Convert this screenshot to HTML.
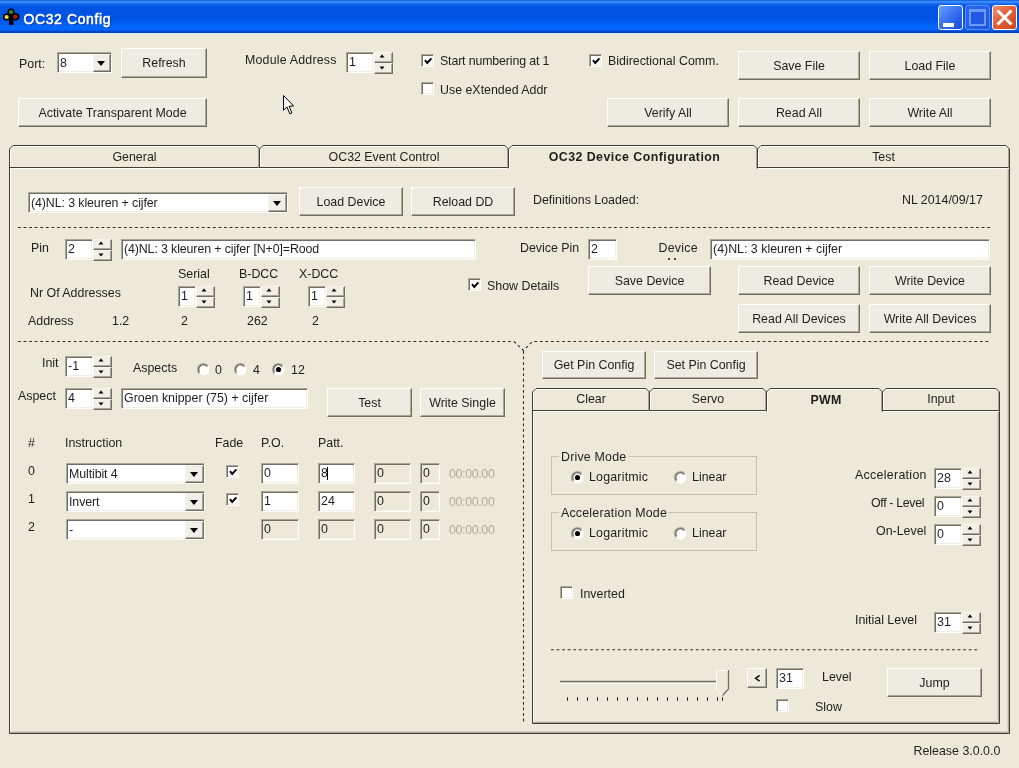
<!DOCTYPE html><html><head><meta charset="utf-8"><style>
html,body{margin:0;padding:0}
body{width:1019px;height:768px;position:relative;overflow:hidden;background:#ECE9D8;font-family:"Liberation Sans",sans-serif;font-size:12.4px;color:#1E1E1E}
#root{position:absolute;left:0;top:0;width:1019px;height:768px;filter:blur(0.3px);will-change:transform}
.l{position:absolute;white-space:nowrap;line-height:15px;-webkit-font-smoothing:antialiased}
.b{position:absolute;box-sizing:border-box;border:1px solid;border-color:#fff #716F64 #716F64 #fff;box-shadow:inset -1px -1px #ACA899;background:#EEEBE2}
.e{position:absolute;box-sizing:border-box;border:1px solid;border-color:#ACA899 #fff #fff #ACA899;box-shadow:inset 1px 1px #716F64,inset -1px -1px #F1EFE2}
.ud{position:absolute;box-sizing:border-box;border:1px solid;border-color:#F6F4EC #716F64 #716F64 #F6F4EC;box-shadow:inset -1px -1px #ACA899;background:#F0EEE6}
.cb{position:absolute;box-sizing:border-box;border:1px solid;border-color:#F6F4EC #716F64 #716F64 #F6F4EC;box-shadow:inset -1px -1px #ACA899;background:#F0EEE6}
.au,.ad,.ac{position:absolute;left:50%;top:50%;width:0;height:0;border-style:solid;border-color:transparent}
.au{margin-left:-3px;margin-top:-2px;border-width:0 2.5px 3px 2.5px;border-bottom-color:#000}
.ad{margin-left:-3px;margin-top:-2px;border-width:3px 2.5px 0 2.5px;border-top-color:#000}
.ac{margin-left:-5px;margin-top:-2px;border-width:5px 4px 0 4px;border-top-color:#000}
.ck{position:absolute;width:13px;height:13px;box-sizing:border-box;border:1px solid;border-color:#ACA899 #fff #fff #ACA899;box-shadow:inset 1px 1px #716F64,inset -1px -1px #F1EFE2;background:#fff}
.rd{position:absolute}
svg{overflow:visible}
</style></head><body><div id="root">

<div style="position:absolute;left:0;top:0;width:1019px;height:34px;background:linear-gradient(180deg,#0A50D2 0px,#3C8CFF 1.5px,#3282FA 2.5px,#0E62EC 4.5px,#0054E4 7px,#0053E3 18px,#005CF0 23px,#0066FF 26.5px,#0064FC 30.2px,#0042C4 31.6px,#0040BE 32.6px,#D8E6F2 33px,#E2EAEA 34px)"></div>

<svg style="position:absolute;left:2px;top:8px" width="20" height="18" viewBox="0 0 20 18">
<circle cx="9" cy="4.2" r="3.6" fill="#000"/>
<circle cx="4.6" cy="9" r="3.6" fill="#000"/>
<circle cx="13.6" cy="8.8" r="3.8" fill="#000"/>
<rect x="6.5" y="4" width="5" height="6" fill="#000"/>
<path d="M7 9 L11.5 9 L11.5 17 L7 17 Z" fill="#000"/>
<circle cx="9" cy="4" r="2.1" fill="#2F8F2F"/>
<circle cx="4.6" cy="9" r="2.1" fill="#EEDC40"/>
<circle cx="13.4" cy="8.8" r="2.2" fill="#A81C1C"/>
</svg>
<div class="l" style="left:23.5px;top:10.7px;color:#fff;font-weight:normal;-webkit-text-stroke:0.55px #fff;font-size:14px;line-height:16px;letter-spacing:0.6px;text-shadow:1px 1px 0 #0A2F9E">OC32 Config</div>
<div style="position:absolute;left:938px;top:5px;width:25px;height:25px;box-sizing:border-box;border:1px solid #fff;border-radius:3px;background:linear-gradient(135deg,#6A9EFF,#3A74F4 45%,#2458E0 80%,#1B4FD8)"><div style="position:absolute;left:4px;top:17px;width:11px;height:4px;background:#fff"></div></div>
<div style="position:absolute;left:965px;top:5px;width:25px;height:25px;box-sizing:border-box;border:1px solid #5C8CF4;border-radius:3px;background:linear-gradient(135deg,#2A68F2,#1B56E2)"><div style="position:absolute;left:3px;top:3px;width:17px;height:17px;box-sizing:border-box;border:2px solid #6E98F2;border-top-width:3px;background:#2058E4"></div></div>
<div style="position:absolute;left:992px;top:5px;width:25px;height:25px;box-sizing:border-box;border:1px solid #fff;border-radius:3px;background:linear-gradient(135deg,#F29068,#E2603A 45%,#D44E26 80%,#C8441E)">
<svg style="position:absolute;left:0;top:0" width="23" height="23"><path d="M4.5 4.5 L18.5 18.5 M18.5 4.5 L4.5 18.5" stroke="#fff" stroke-width="3"/></svg></div>

<div class="l" style="left:19px;top:57.00px;">Port:</div>
<div class="e" style="left:57px;top:52px;width:55px;height:21px;background:#fff"></div>
<div class="cb" style="left:93px;top:54px;width:18px;height:18px"><div class="ac"></div></div>
<div class="l" style="left:60px;top:55.70px;letter-spacing:-0.1px;">8</div>
<div class="b" style="left:121px;top:48px;width:86px;height:30px"></div>
<div class="l" style="left:14.0px;top:56.30px;width:300px;text-align:center;">Refresh</div>
<div class="b" style="left:18px;top:98px;width:189px;height:29px"></div>
<div class="l" style="left:-37.5px;top:105.80px;width:300px;text-align:center;">Activate Transparent Mode</div>
<div class="l" style="left:245px;top:53.00px;letter-spacing:0.2px;">Module Address</div>
<div class="e" style="left:346px;top:52px;width:28px;height:21px;background:#fff"></div>
<div class="l" style="left:349px;top:55.00px;">1</div>
<div class="ud" style="left:374px;top:52px;width:19px;height:11px"></div>
<div class="ud" style="left:374px;top:63px;width:19px;height:11px"></div>
<svg style="position:absolute;left:379.2px;top:53.9px" width="6" height="4"><path d="M0.5 3.5 L3 0.5 L5.5 3.5 Z" fill="#000"/></svg>
<svg style="position:absolute;left:379.2px;top:66.0px" width="6" height="4"><path d="M0.5 0.5 L3 3.5 L5.5 0.5 Z" fill="#000"/></svg>
<div class="ck" style="left:421px;top:54px"><svg width="13" height="13" style="position:absolute;left:0;top:0"><path d="M3 5.2 L5.2 8 L9.4 3.3" stroke="#000" stroke-width="2" fill="none"/></svg></div>
<div class="l" style="left:440px;top:54.30px;letter-spacing:-0.15px;">Start numbering at 1</div>
<div class="ck" style="left:421px;top:82px"></div>
<div class="l" style="left:440px;top:83.00px;">Use eXtended Addr</div>
<div class="ck" style="left:589px;top:54px"><svg width="13" height="13" style="position:absolute;left:0;top:0"><path d="M3 5.2 L5.2 8 L9.4 3.3" stroke="#000" stroke-width="2" fill="none"/></svg></div>
<div class="l" style="left:608px;top:54.30px;">Bidirectional Comm.</div>
<div class="b" style="left:738px;top:51px;width:122px;height:29px"></div>
<div class="l" style="left:649.0px;top:58.80px;width:300px;text-align:center;">Save File</div>
<div class="b" style="left:869px;top:51px;width:122px;height:29px"></div>
<div class="l" style="left:780.0px;top:58.80px;width:300px;text-align:center;">Load File</div>
<div class="b" style="left:607px;top:98px;width:122px;height:29px"></div>
<div class="l" style="left:518.0px;top:105.80px;width:300px;text-align:center;">Verify All</div>
<div class="b" style="left:738px;top:98px;width:122px;height:29px"></div>
<div class="l" style="left:649.0px;top:105.80px;width:300px;text-align:center;">Read All</div>
<div class="b" style="left:869px;top:98px;width:122px;height:29px"></div>
<div class="l" style="left:780.0px;top:105.80px;width:300px;text-align:center;">Write All</div>
<svg style="position:absolute;left:283px;top:95px" width="14" height="22" viewBox="0 0 14 22">
<path d="M0.5 0.5 L0.5 15.3 L3.9 11.9 L6.9 18.9 L8.9 18 L6.1 11.2 L10.6 11 Z" fill="#fff" stroke="#000" stroke-width="1"/></svg>
<svg style="position:absolute;left:0;top:0" width="1019" height="768"><path d="M9.5 167 V733.5 H1009.5 V167" stroke="#3F3D35" fill="none"/><path d="M10.5 168 V732" stroke="#fff" fill="none"/><path d="M10 732.5 H1008.5 V168" stroke="#ACA899" fill="none"/><path d="M11 731.5 H1007.5 V169" stroke="#D8D4C6" fill="none"/><path d="M9 167.5 H509 M757 167.5 H1010" stroke="#3F3D35" fill="none"/><path d="M10 168.5 H510 M757 168.5 H1009" stroke="#fff" fill="none"/><path d="M258.5 149 V167.5" stroke="#ACA899" fill="none"/><path d="M9.5 167.5 V149 L13 145.5 H256 L259.5 149 V167.5" stroke="#3F3D35" fill="none"/><path d="M10.5 167.0 V149.5 L13.5 146.5 H255.5" stroke="#fff" fill="none"/><path d="M507.5 149 V167.5" stroke="#ACA899" fill="none"/><path d="M259.5 167.5 V149 L263 145.5 H505 L508.5 149 V167.5" stroke="#3F3D35" fill="none"/><path d="M260.5 167.0 V149.5 L263.5 146.5 H504.5" stroke="#fff" fill="none"/><path d="M756.5 149 V168.5" stroke="#ACA899" fill="none"/><path d="M508.5 168.5 V149 L512 145.5 H754 L757.5 149 V168.5" stroke="#3F3D35" fill="none"/><path d="M509.5 169.0 V149.5 L512.5 146.5 H753.5" stroke="#fff" fill="none"/><path d="M1008.5 149 V167.5" stroke="#ACA899" fill="none"/><path d="M757.5 167.5 V149 L761 145.5 H1006 L1009.5 149 V167.5" stroke="#3F3D35" fill="none"/><path d="M758.5 167.0 V149.5 L761.5 146.5 H1005.5" stroke="#fff" fill="none"/></svg>
<div class="l" style="left:-15.5px;top:149.80px;width:300px;text-align:center;">General</div>
<div class="l" style="left:234.0px;top:149.80px;width:300px;text-align:center;">OC32 Event Control</div>
<div class="l" style="left:484.5px;top:150.40px;width:300px;text-align:center;font-weight:bold;letter-spacing:0.45px;">OC32 Device Configuration</div>
<div class="l" style="left:733.5px;top:149.80px;width:300px;text-align:center;">Test</div>
<div class="e" style="left:28px;top:192px;width:260px;height:21px;background:#fff"></div>
<div class="cb" style="left:268px;top:194px;width:19px;height:18px"><div class="ac"></div></div>
<div class="l" style="left:31px;top:195.70px;letter-spacing:-0.1px;">(4)NL: 3 kleuren + cijfer</div>
<div class="b" style="left:299px;top:187px;width:104px;height:29px"></div>
<div class="l" style="left:201.0px;top:194.80px;width:300px;text-align:center;">Load Device</div>
<div class="b" style="left:411px;top:187px;width:104px;height:29px"></div>
<div class="l" style="left:313.0px;top:194.80px;width:300px;text-align:center;">Reload DD</div>
<div class="l" style="left:533px;top:193.00px;">Definitions Loaded:</div>
<div class="l" style="left:902px;top:193.00px;">NL 2014/09/17</div>
<svg style="position:absolute;left:0;top:0" width="1019" height="768"><path d="M18 227.5 H990" stroke="#2E2C25" stroke-width="1.1" stroke-dasharray="2.8 2.77" fill="none"/></svg>
<div class="l" style="left:31px;top:241.00px;">Pin</div>
<div class="e" style="left:65px;top:239px;width:28px;height:21px;background:#fff"></div>
<div class="l" style="left:68px;top:242.00px;">2</div>
<div class="ud" style="left:93px;top:239px;width:19px;height:11px"></div>
<div class="ud" style="left:93px;top:250px;width:19px;height:11px"></div>
<svg style="position:absolute;left:98.2px;top:240.9px" width="6" height="4"><path d="M0.5 3.5 L3 0.5 L5.5 3.5 Z" fill="#000"/></svg>
<svg style="position:absolute;left:98.2px;top:253.0px" width="6" height="4"><path d="M0.5 0.5 L3 3.5 L5.5 0.5 Z" fill="#000"/></svg>
<div class="e" style="left:121px;top:239px;width:355px;height:21px;background:#fff"></div>
<div class="l" style="left:124px;top:242.00px;letter-spacing:-0.12px;">(4)NL: 3 kleuren + cijfer [N+0]=Rood</div>
<div class="l" style="left:520px;top:241.00px;">Device Pin</div>
<div class="e" style="left:588px;top:239px;width:29px;height:21px;background:#fff"></div>
<div class="l" style="left:591px;top:242.00px;">2</div>
<div class="l" style="left:658.5px;top:241.00px;letter-spacing:0.25px;">Device</div>
<div style="position:absolute;left:667.5px;top:258px;width:2px;height:2px;background:#444"></div><div style="position:absolute;left:674px;top:258px;width:2px;height:2px;background:#444"></div>
<div class="e" style="left:710px;top:239px;width:280px;height:21px;background:#fff"></div>
<div class="l" style="left:713px;top:242.00px;">(4)NL: 3 kleuren + cijfer</div>
<div class="l" style="left:178px;top:267.00px;">Serial</div>
<div class="l" style="left:239px;top:267.00px;">B-DCC</div>
<div class="l" style="left:299px;top:267.00px;">X-DCC</div>
<div class="l" style="left:30px;top:286.00px;">Nr Of Addresses</div>
<div class="e" style="left:178px;top:286px;width:18px;height:21px;background:#fff"></div>
<div class="l" style="left:181px;top:289.00px;">1</div>
<div class="ud" style="left:196px;top:286px;width:19px;height:11px"></div>
<div class="ud" style="left:196px;top:297px;width:19px;height:11px"></div>
<svg style="position:absolute;left:201.2px;top:287.9px" width="6" height="4"><path d="M0.5 3.5 L3 0.5 L5.5 3.5 Z" fill="#000"/></svg>
<svg style="position:absolute;left:201.2px;top:300.0px" width="6" height="4"><path d="M0.5 0.5 L3 3.5 L5.5 0.5 Z" fill="#000"/></svg>
<div class="e" style="left:243px;top:286px;width:18px;height:21px;background:#fff"></div>
<div class="l" style="left:246px;top:289.00px;">1</div>
<div class="ud" style="left:261px;top:286px;width:19px;height:11px"></div>
<div class="ud" style="left:261px;top:297px;width:19px;height:11px"></div>
<svg style="position:absolute;left:266.2px;top:287.9px" width="6" height="4"><path d="M0.5 3.5 L3 0.5 L5.5 3.5 Z" fill="#000"/></svg>
<svg style="position:absolute;left:266.2px;top:300.0px" width="6" height="4"><path d="M0.5 0.5 L3 3.5 L5.5 0.5 Z" fill="#000"/></svg>
<div class="e" style="left:308px;top:286px;width:18px;height:21px;background:#fff"></div>
<div class="l" style="left:311px;top:289.00px;">1</div>
<div class="ud" style="left:326px;top:286px;width:19px;height:11px"></div>
<div class="ud" style="left:326px;top:297px;width:19px;height:11px"></div>
<svg style="position:absolute;left:331.2px;top:287.9px" width="6" height="4"><path d="M0.5 3.5 L3 0.5 L5.5 3.5 Z" fill="#000"/></svg>
<svg style="position:absolute;left:331.2px;top:300.0px" width="6" height="4"><path d="M0.5 0.5 L3 3.5 L5.5 0.5 Z" fill="#000"/></svg>
<div class="ck" style="left:468px;top:278px"><svg width="13" height="13" style="position:absolute;left:0;top:0"><path d="M3 5.2 L5.2 8 L9.4 3.3" stroke="#000" stroke-width="2" fill="none"/></svg></div>
<div class="l" style="left:487px;top:279.00px;">Show Details</div>
<div class="b" style="left:588px;top:266px;width:123px;height:29px"></div>
<div class="l" style="left:499.5px;top:273.80px;width:300px;text-align:center;">Save Device</div>
<div class="b" style="left:738px;top:266px;width:122px;height:29px"></div>
<div class="l" style="left:649.0px;top:273.80px;width:300px;text-align:center;">Read Device</div>
<div class="b" style="left:869px;top:266px;width:122px;height:29px"></div>
<div class="l" style="left:780.0px;top:273.80px;width:300px;text-align:center;">Write Device</div>
<div class="b" style="left:738px;top:304px;width:122px;height:29px"></div>
<div class="l" style="left:649.0px;top:311.80px;width:300px;text-align:center;">Read All Devices</div>
<div class="b" style="left:869px;top:304px;width:122px;height:29px"></div>
<div class="l" style="left:780.0px;top:311.80px;width:300px;text-align:center;">Write All Devices</div>
<div class="l" style="left:28px;top:314.00px;">Address</div>
<div class="l" style="left:112px;top:314.00px;">1.2</div>
<div class="l" style="left:181px;top:314.00px;">2</div>
<div class="l" style="left:247px;top:314.00px;">262</div>
<div class="l" style="left:312px;top:314.00px;">2</div>
<svg style="position:absolute;left:0;top:0" width="1019" height="768">
<path d="M18 341.5 H514 L523.5 350.5 L532.5 341.5 H990" stroke="#2E2C25" stroke-width="1.1" stroke-dasharray="2.8 2.77" fill="none"/>
<path d="M523.5 351 V723" stroke="#2E2C25" stroke-width="1.1" stroke-dasharray="2.8 2.77" fill="none"/>
</svg>
<div class="l" style="left:42px;top:356.20px;">Init</div>
<div class="e" style="left:65px;top:356px;width:28px;height:21px;background:#fff"></div>
<div class="l" style="left:68px;top:359.00px;">-1</div>
<div class="ud" style="left:93px;top:356px;width:19px;height:11px"></div>
<div class="ud" style="left:93px;top:367px;width:19px;height:11px"></div>
<svg style="position:absolute;left:98.2px;top:357.9px" width="6" height="4"><path d="M0.5 3.5 L3 0.5 L5.5 3.5 Z" fill="#000"/></svg>
<svg style="position:absolute;left:98.2px;top:370.0px" width="6" height="4"><path d="M0.5 0.5 L3 3.5 L5.5 0.5 Z" fill="#000"/></svg>
<div class="l" style="left:133px;top:361.00px;">Aspects</div>
<svg class="rd" style="left:197px;top:363px" width="13" height="13" viewBox="0 0 13 13">
<circle cx="6.5" cy="6.5" r="6" fill="#fff"/>
<path d="M2.25 10.75 A6 6 0 0 1 10.75 2.25" stroke="#ACA899" stroke-width="1.1" fill="none"/>
<path d="M2.6 9.4 A4.8 4.8 0 0 1 10.4 3.6" stroke="#716F64" stroke-width="1.4" fill="none"/>
</svg>
<div class="l" style="left:215px;top:363.00px;">0</div>
<svg class="rd" style="left:234px;top:363px" width="13" height="13" viewBox="0 0 13 13">
<circle cx="6.5" cy="6.5" r="6" fill="#fff"/>
<path d="M2.25 10.75 A6 6 0 0 1 10.75 2.25" stroke="#ACA899" stroke-width="1.1" fill="none"/>
<path d="M2.6 9.4 A4.8 4.8 0 0 1 10.4 3.6" stroke="#716F64" stroke-width="1.4" fill="none"/>
</svg>
<div class="l" style="left:253px;top:363.00px;">4</div>
<svg class="rd" style="left:272px;top:363px" width="13" height="13" viewBox="0 0 13 13">
<circle cx="6.5" cy="6.5" r="6" fill="#fff"/>
<path d="M2.25 10.75 A6 6 0 0 1 10.75 2.25" stroke="#ACA899" stroke-width="1.1" fill="none"/>
<path d="M2.6 9.4 A4.8 4.8 0 0 1 10.4 3.6" stroke="#716F64" stroke-width="1.4" fill="none"/>
<circle cx="6.5" cy="6.5" r="2.6" fill="#000"/></svg>
<div class="l" style="left:291px;top:363.00px;">12</div>
<div class="l" style="left:18px;top:389.00px;">Aspect</div>
<div class="e" style="left:65px;top:388px;width:28px;height:21px;background:#fff"></div>
<div class="l" style="left:68px;top:391.00px;">4</div>
<div class="ud" style="left:93px;top:388px;width:19px;height:11px"></div>
<div class="ud" style="left:93px;top:399px;width:19px;height:11px"></div>
<svg style="position:absolute;left:98.2px;top:389.9px" width="6" height="4"><path d="M0.5 3.5 L3 0.5 L5.5 3.5 Z" fill="#000"/></svg>
<svg style="position:absolute;left:98.2px;top:402.0px" width="6" height="4"><path d="M0.5 0.5 L3 3.5 L5.5 0.5 Z" fill="#000"/></svg>
<div class="e" style="left:121px;top:388px;width:187px;height:21px;background:#fff"></div>
<div class="l" style="left:124px;top:391.00px;">Groen knipper (75) + cijfer</div>
<div class="b" style="left:327px;top:388px;width:85px;height:29px"></div>
<div class="l" style="left:219.5px;top:395.80px;width:300px;text-align:center;">Test</div>
<div class="b" style="left:420px;top:388px;width:85px;height:29px"></div>
<div class="l" style="left:312.5px;top:395.80px;width:300px;text-align:center;">Write Single</div>
<div class="l" style="left:28px;top:436.00px;">#</div>
<div class="l" style="left:65px;top:436.00px;">Instruction</div>
<div class="l" style="left:215px;top:436.00px;">Fade</div>
<div class="l" style="left:261px;top:436.00px;">P.O.</div>
<div class="l" style="left:318px;top:436.00px;">Patt.</div>
<div class="l" style="left:28px;top:464.00px;">0</div>
<div class="e" style="left:66px;top:463px;width:139px;height:21px;background:#fff"></div>
<div class="cb" style="left:185px;top:465px;width:19px;height:18px"><div class="ac"></div></div>
<div class="l" style="left:69px;top:466.70px;letter-spacing:-0.1px;">Multibit 4</div>
<div class="ck" style="left:226px;top:465px"><svg width="13" height="13" style="position:absolute;left:0;top:0"><path d="M3 5.2 L5.2 8 L9.4 3.3" stroke="#000" stroke-width="2" fill="none"/></svg></div>
<div class="e" style="left:261px;top:463px;width:38px;height:21px;background:#fff"></div>
<div class="l" style="left:264px;top:466.00px;">0</div>
<div class="e" style="left:318px;top:463px;width:37px;height:21px;background:#fff"></div>
<div class="l" style="left:321px;top:466.00px;">8</div>
<div class="e" style="left:374px;top:463px;width:37px;height:21px;background:#ECE9D8"></div>
<div class="l" style="left:377px;top:466.00px;">0</div>
<div class="e" style="left:420px;top:463px;width:20px;height:21px;background:#ECE9D8"></div>
<div class="l" style="left:423px;top:466.00px;">0</div>
<div class="l" style="left:449px;top:467.00px;color:#B0AD9E;letter-spacing:-0.35px;">00:00.00</div>
<div class="l" style="left:28px;top:492.00px;">1</div>
<div class="e" style="left:66px;top:491px;width:139px;height:21px;background:#fff"></div>
<div class="cb" style="left:185px;top:493px;width:19px;height:18px"><div class="ac"></div></div>
<div class="l" style="left:69px;top:494.70px;letter-spacing:-0.1px;">Invert</div>
<div class="ck" style="left:226px;top:493px"><svg width="13" height="13" style="position:absolute;left:0;top:0"><path d="M3 5.2 L5.2 8 L9.4 3.3" stroke="#000" stroke-width="2" fill="none"/></svg></div>
<div class="e" style="left:261px;top:491px;width:38px;height:21px;background:#fff"></div>
<div class="l" style="left:264px;top:494.00px;">1</div>
<div class="e" style="left:318px;top:491px;width:37px;height:21px;background:#fff"></div>
<div class="l" style="left:321px;top:494.00px;">24</div>
<div class="e" style="left:374px;top:491px;width:37px;height:21px;background:#ECE9D8"></div>
<div class="l" style="left:377px;top:494.00px;">0</div>
<div class="e" style="left:420px;top:491px;width:20px;height:21px;background:#ECE9D8"></div>
<div class="l" style="left:423px;top:494.00px;">0</div>
<div class="l" style="left:449px;top:495.00px;color:#B0AD9E;letter-spacing:-0.35px;">00:00.00</div>
<div class="l" style="left:28px;top:520.00px;">2</div>
<div class="e" style="left:66px;top:519px;width:139px;height:21px;background:#fff"></div>
<div class="cb" style="left:185px;top:521px;width:19px;height:18px"><div class="ac"></div></div>
<div class="l" style="left:69px;top:522.70px;letter-spacing:-0.1px;">-</div>
<div class="e" style="left:261px;top:519px;width:38px;height:21px;background:#ECE9D8"></div>
<div class="l" style="left:264px;top:522.00px;">0</div>
<div class="e" style="left:318px;top:519px;width:37px;height:21px;background:#ECE9D8"></div>
<div class="l" style="left:321px;top:522.00px;">0</div>
<div class="e" style="left:374px;top:519px;width:37px;height:21px;background:#ECE9D8"></div>
<div class="l" style="left:377px;top:522.00px;">0</div>
<div class="e" style="left:420px;top:519px;width:20px;height:21px;background:#ECE9D8"></div>
<div class="l" style="left:423px;top:522.00px;">0</div>
<div class="l" style="left:449px;top:523.00px;color:#B0AD9E;letter-spacing:-0.35px;">00:00.00</div>
<div style="position:absolute;left:327px;top:467px;width:1px;height:13px;background:#000"></div>
<div class="b" style="left:542px;top:351px;width:104px;height:28px"></div>
<div class="l" style="left:444.0px;top:358.30px;width:300px;text-align:center;">Get Pin Config</div>
<div class="b" style="left:654px;top:351px;width:104px;height:28px"></div>
<div class="l" style="left:556.0px;top:358.30px;width:300px;text-align:center;">Set Pin Config</div>
<svg style="position:absolute;left:0;top:0" width="1019" height="768"><path d="M532.5 410 V723.5 H999.5 V410" stroke="#3F3D35" fill="none"/><path d="M533.5 411 V722" stroke="#fff" fill="none"/><path d="M533 722.5 H998.5 V411" stroke="#ACA899" fill="none"/><path d="M534 721.5 H997.5 V412" stroke="#D8D4C6" fill="none"/><path d="M532 410.5 H767 M882 410.5 H1000" stroke="#3F3D35" fill="none"/><path d="M533 411.5 H768 M882 411.5 H999" stroke="#fff" fill="none"/><path d="M648.5 392 V410.5" stroke="#ACA899" fill="none"/><path d="M532.5 410.5 V392 L536 388.5 H646 L649.5 392 V410.5" stroke="#3F3D35" fill="none"/><path d="M533.5 410.0 V392.5 L536.5 389.5 H645.5" stroke="#fff" fill="none"/><path d="M765.5 392 V410.5" stroke="#ACA899" fill="none"/><path d="M649.5 410.5 V392 L653 388.5 H763 L766.5 392 V410.5" stroke="#3F3D35" fill="none"/><path d="M650.5 410.0 V392.5 L653.5 389.5 H762.5" stroke="#fff" fill="none"/><path d="M881.5 392 V411.5" stroke="#ACA899" fill="none"/><path d="M766.5 411.5 V392 L770 388.5 H879 L882.5 392 V411.5" stroke="#3F3D35" fill="none"/><path d="M767.5 412.0 V392.5 L770.5 389.5 H878.5" stroke="#fff" fill="none"/><path d="M998.5 392 V410.5" stroke="#ACA899" fill="none"/><path d="M882.5 410.5 V392 L886 388.5 H996 L999.5 392 V410.5" stroke="#3F3D35" fill="none"/><path d="M883.5 410.0 V392.5 L886.5 389.5 H995.5" stroke="#fff" fill="none"/></svg>
<div class="l" style="left:441.0px;top:392.00px;width:300px;text-align:center;">Clear</div>
<div class="l" style="left:558.0px;top:392.00px;width:300px;text-align:center;">Servo</div>
<div class="l" style="left:676.0px;top:393.00px;width:300px;text-align:center;font-weight:bold;letter-spacing:0.3px;">PWM</div>
<div class="l" style="left:791.0px;top:392.00px;width:300px;text-align:center;">Input</div>
<div style="position:absolute;left:551px;top:456px;width:206px;height:39px;box-sizing:border-box;border:1px solid #C4C1B2"></div>
<div style="position:absolute;left:559px;top:450px;width:70px;height:12px;background:#ECE9D8"></div>
<div class="l" style="left:561px;top:449.50px;letter-spacing:0.2px;">Drive Mode</div>
<svg class="rd" style="left:571px;top:471px" width="13" height="13" viewBox="0 0 13 13">
<circle cx="6.5" cy="6.5" r="6" fill="#fff"/>
<path d="M2.25 10.75 A6 6 0 0 1 10.75 2.25" stroke="#ACA899" stroke-width="1.1" fill="none"/>
<path d="M2.6 9.4 A4.8 4.8 0 0 1 10.4 3.6" stroke="#716F64" stroke-width="1.4" fill="none"/>
<circle cx="6.5" cy="6.5" r="2.6" fill="#000"/></svg>
<div class="l" style="left:589px;top:470.00px;letter-spacing:0.2px;">Logaritmic</div>
<svg class="rd" style="left:674px;top:471px" width="13" height="13" viewBox="0 0 13 13">
<circle cx="6.5" cy="6.5" r="6" fill="#fff"/>
<path d="M2.25 10.75 A6 6 0 0 1 10.75 2.25" stroke="#ACA899" stroke-width="1.1" fill="none"/>
<path d="M2.6 9.4 A4.8 4.8 0 0 1 10.4 3.6" stroke="#716F64" stroke-width="1.4" fill="none"/>
</svg>
<div class="l" style="left:692px;top:470.00px;">Linear</div>
<div style="position:absolute;left:551px;top:512px;width:206px;height:39px;box-sizing:border-box;border:1px solid #C4C1B2"></div>
<div style="position:absolute;left:559px;top:506px;width:109px;height:12px;background:#ECE9D8"></div>
<div class="l" style="left:561px;top:505.50px;letter-spacing:0.2px;">Acceleration Mode</div>
<svg class="rd" style="left:571px;top:527px" width="13" height="13" viewBox="0 0 13 13">
<circle cx="6.5" cy="6.5" r="6" fill="#fff"/>
<path d="M2.25 10.75 A6 6 0 0 1 10.75 2.25" stroke="#ACA899" stroke-width="1.1" fill="none"/>
<path d="M2.6 9.4 A4.8 4.8 0 0 1 10.4 3.6" stroke="#716F64" stroke-width="1.4" fill="none"/>
<circle cx="6.5" cy="6.5" r="2.6" fill="#000"/></svg>
<div class="l" style="left:589px;top:526.00px;letter-spacing:0.2px;">Logaritmic</div>
<svg class="rd" style="left:674px;top:527px" width="13" height="13" viewBox="0 0 13 13">
<circle cx="6.5" cy="6.5" r="6" fill="#fff"/>
<path d="M2.25 10.75 A6 6 0 0 1 10.75 2.25" stroke="#ACA899" stroke-width="1.1" fill="none"/>
<path d="M2.6 9.4 A4.8 4.8 0 0 1 10.4 3.6" stroke="#716F64" stroke-width="1.4" fill="none"/>
</svg>
<div class="l" style="left:692px;top:526.00px;">Linear</div>
<div class="l" style="left:855px;top:468.00px;letter-spacing:0.3px;">Acceleration</div>
<div class="e" style="left:934px;top:468px;width:28px;height:21px;background:#fff"></div>
<div class="l" style="left:937px;top:471.00px;">28</div>
<div class="ud" style="left:962px;top:468px;width:19px;height:11px"></div>
<div class="ud" style="left:962px;top:479px;width:19px;height:11px"></div>
<svg style="position:absolute;left:967.2px;top:469.9px" width="6" height="4"><path d="M0.5 3.5 L3 0.5 L5.5 3.5 Z" fill="#000"/></svg>
<svg style="position:absolute;left:967.2px;top:482.0px" width="6" height="4"><path d="M0.5 0.5 L3 3.5 L5.5 0.5 Z" fill="#000"/></svg>
<div class="l" style="left:871px;top:496.00px;letter-spacing:-0.35px;">Off - Level</div>
<div class="e" style="left:934px;top:496px;width:28px;height:21px;background:#fff"></div>
<div class="l" style="left:937px;top:499.00px;">0</div>
<div class="ud" style="left:962px;top:496px;width:19px;height:11px"></div>
<div class="ud" style="left:962px;top:507px;width:19px;height:11px"></div>
<svg style="position:absolute;left:967.2px;top:497.9px" width="6" height="4"><path d="M0.5 3.5 L3 0.5 L5.5 3.5 Z" fill="#000"/></svg>
<svg style="position:absolute;left:967.2px;top:510.0px" width="6" height="4"><path d="M0.5 0.5 L3 3.5 L5.5 0.5 Z" fill="#000"/></svg>
<div class="l" style="left:876px;top:524.00px;">On-Level</div>
<div class="e" style="left:934px;top:524px;width:28px;height:21px;background:#fff"></div>
<div class="l" style="left:937px;top:527.00px;">0</div>
<div class="ud" style="left:962px;top:524px;width:19px;height:11px"></div>
<div class="ud" style="left:962px;top:535px;width:19px;height:11px"></div>
<svg style="position:absolute;left:967.2px;top:525.9px" width="6" height="4"><path d="M0.5 3.5 L3 0.5 L5.5 3.5 Z" fill="#000"/></svg>
<svg style="position:absolute;left:967.2px;top:538.0px" width="6" height="4"><path d="M0.5 0.5 L3 3.5 L5.5 0.5 Z" fill="#000"/></svg>
<div class="ck" style="left:560px;top:586px"></div>
<div class="l" style="left:580px;top:587.00px;">Inverted</div>
<div class="l" style="left:855px;top:613.00px;">Initial Level</div>
<div class="e" style="left:934px;top:612px;width:28px;height:21px;background:#fff"></div>
<div class="l" style="left:937px;top:615.00px;">31</div>
<div class="ud" style="left:962px;top:612px;width:19px;height:11px"></div>
<div class="ud" style="left:962px;top:623px;width:19px;height:11px"></div>
<svg style="position:absolute;left:967.2px;top:613.9px" width="6" height="4"><path d="M0.5 3.5 L3 0.5 L5.5 3.5 Z" fill="#000"/></svg>
<svg style="position:absolute;left:967.2px;top:626.0px" width="6" height="4"><path d="M0.5 0.5 L3 3.5 L5.5 0.5 Z" fill="#000"/></svg>
<svg style="position:absolute;left:0;top:0" width="1019" height="768"><path d="M551 649.8 H980" stroke="#2E2C25" stroke-width="1.1" stroke-dasharray="2.8 2.77" fill="none"/></svg>
<svg style="position:absolute;left:0;top:0" width="1019" height="768">
<path d="M560 681.5 H717" stroke="#716F64" stroke-width="1.6"/>
<path d="M560 683.5 H717" stroke="#fff" stroke-width="1.2"/>
<path d="M567.5 697.3 V700.8 M577.5 697.3 V700.8 M587.5 697.3 V700.8 M597.5 697.3 V700.8 M607.5 697.3 V700.8 M617.5 697.3 V700.8 M627.5 697.3 V700.8 M637.5 697.3 V700.8 M647.5 697.3 V700.8 M657.5 697.3 V700.8 M667.5 697.3 V700.8 M677.5 697.3 V700.8 M687.5 697.3 V700.8 M697.5 697.3 V700.8 M707.5 697.3 V700.8 M717.5 697.3 V700.8 M722.5 697.3 V700.8" stroke="#1a1a1a" stroke-width="1"/>
<path d="M716 670 H729 V689 L722.5 695.5 L716 689 Z" fill="#ECE9D8"/>
<path d="M716.5 689 V670.5 H728" stroke="#fff" fill="none"/>
<path d="M728.5 670 V689 L722.5 695.5" stroke="#716F64" fill="none" stroke-width="1.3"/>
<path d="M716.5 689 L722.5 695" stroke="#fff" fill="none"/>
</svg>
<div class="b" style="left:747px;top:668px;width:20px;height:20px"></div>
<svg style="position:absolute;left:754px;top:674px" width="8" height="9"><path d="M5.6 1.4 L1.6 4.3 L5.6 7.2" stroke="#111" stroke-width="1.5" fill="none"/></svg>
<div class="e" style="left:776px;top:668px;width:28px;height:21px;background:#fff"></div>
<div class="l" style="left:779px;top:671.00px;">31</div>
<div class="l" style="left:822px;top:670.00px;">Level</div>
<div class="b" style="left:887px;top:668px;width:95px;height:29px"></div>
<div class="l" style="left:784.5px;top:675.80px;width:300px;text-align:center;">Jump</div>
<div class="ck" style="left:776px;top:699px"></div>
<div class="l" style="left:815px;top:700.00px;">Slow</div>
<div class="l" style="left:913.5px;top:744.00px;">Release 3.0.0.0</div>
</div></body></html>
